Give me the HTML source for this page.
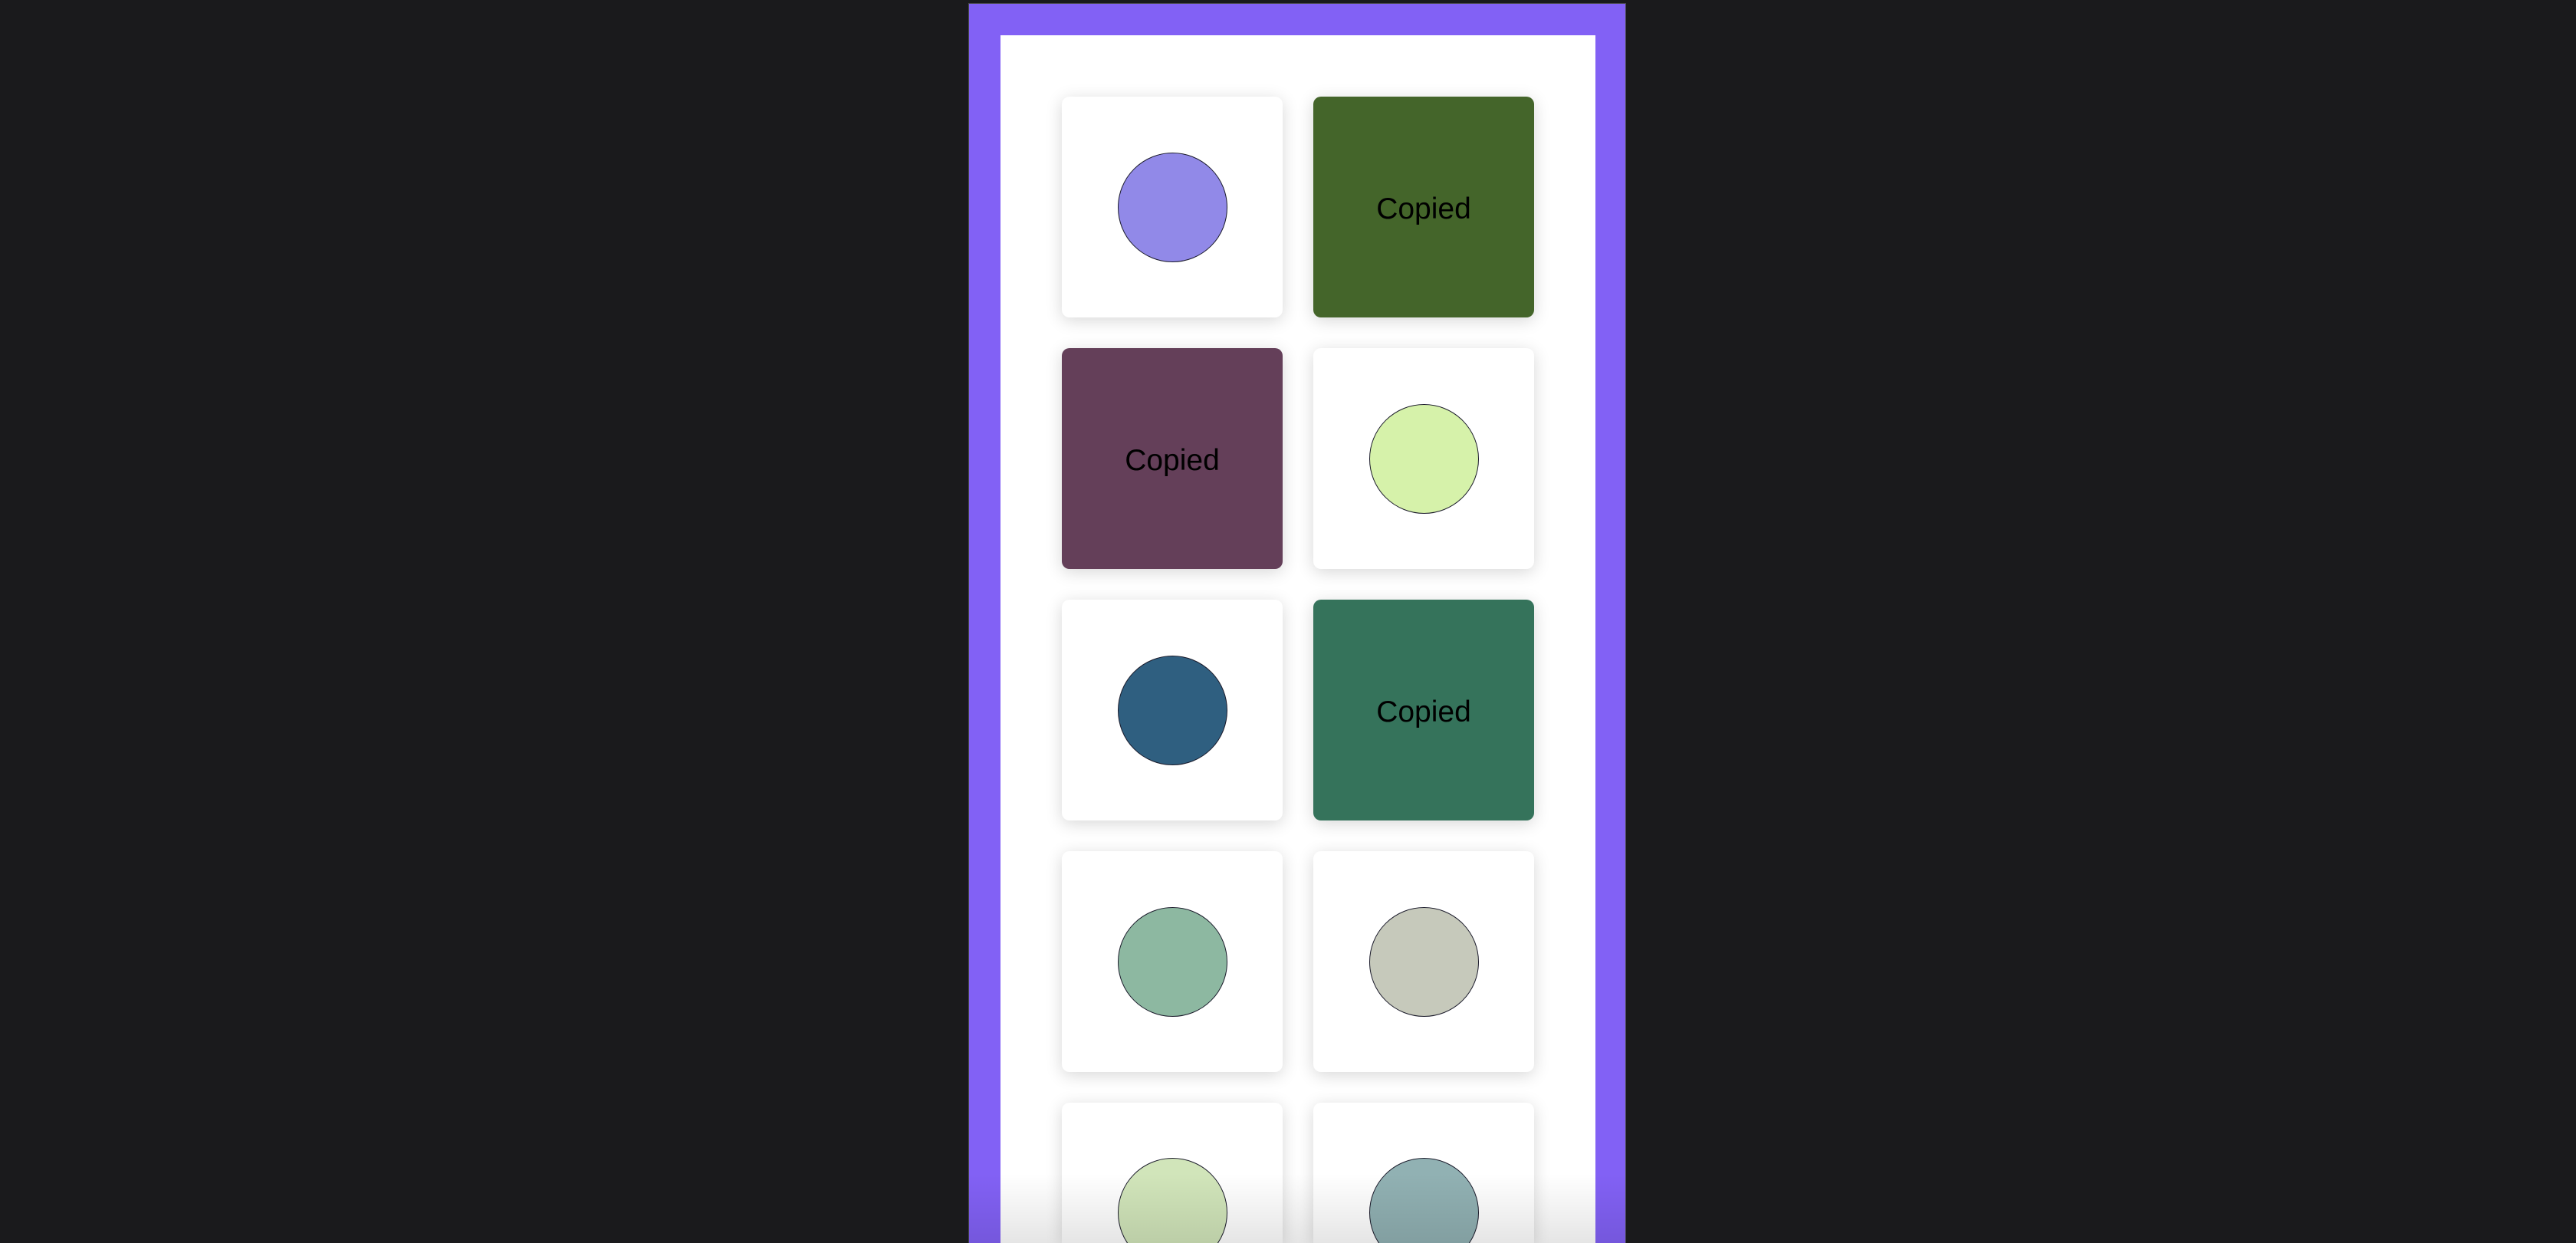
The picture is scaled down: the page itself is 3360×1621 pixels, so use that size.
<!DOCTYPE html>
<html><head><meta charset="utf-8"><style>
html,body{margin:0;padding:0;width:3360px;height:1621px;overflow:hidden;background:#1a1a1c;}
#wrap{position:relative;width:3360px;height:1621px;overflow:hidden;background:#1a1a1c;font-family:"Liberation Sans",sans-serif;}
.frame{position:absolute;left:1263px;top:4px;width:858px;height:1617px;background:#8261f5;border:1px solid #4a4a4e;border-bottom:0;box-sizing:border-box;}
.inner{position:absolute;left:1305px;top:46px;width:776px;height:1575px;background:#fff;}
.card{position:absolute;width:288px;height:288px;border-radius:10px;background:#fff;box-shadow:0 4px 22px rgba(0,0,0,0.16);display:flex;align-items:center;justify-content:center;}
.card.last{height:183px;border-radius:10px 10px 0 0;align-items:flex-start;box-sizing:border-box;padding-top:72px;}
.c{width:141px;height:141px;border-radius:50%;border:1.5px solid #1a1a2a;flex-shrink:0;}
.t{font-size:39px;color:#000;font-weight:300;padding-top:6px;}
.fade{position:absolute;left:1263px;top:1530px;width:858px;height:91px;background:linear-gradient(rgba(0,0,0,0),rgba(0,0,0,0.1));}
</style></head><body><div id="wrap">
<div class="frame"></div>
<div class="inner"></div>
<div class="card" style="left:1385px;top:126px"><div class="c" style="background:#9189e8"></div></div>
<div class="card" style="left:1713px;top:126px;background:#44652a"><span class="t">Copied</span></div>
<div class="card" style="left:1385px;top:454px;background:#643f59"><span class="t">Copied</span></div>
<div class="card" style="left:1713px;top:454px"><div class="c" style="background:#d6f2aa"></div></div>
<div class="card" style="left:1385px;top:782px"><div class="c" style="background:#2f5f80"></div></div>
<div class="card" style="left:1713px;top:782px;background:#35735b"><span class="t">Copied</span></div>
<div class="card" style="left:1385px;top:1110px"><div class="c" style="background:#8db8a1"></div></div>
<div class="card" style="left:1713px;top:1110px"><div class="c" style="background:#c6c9bb"></div></div>
<div class="card last" style="left:1385px;top:1438px"><div class="c" style="background:#d1e5ba;height:141px"></div></div>
<div class="card last" style="left:1713px;top:1438px"><div class="c" style="background:#91b1b3"></div></div>
<div class="fade"></div>
</div></body></html>
